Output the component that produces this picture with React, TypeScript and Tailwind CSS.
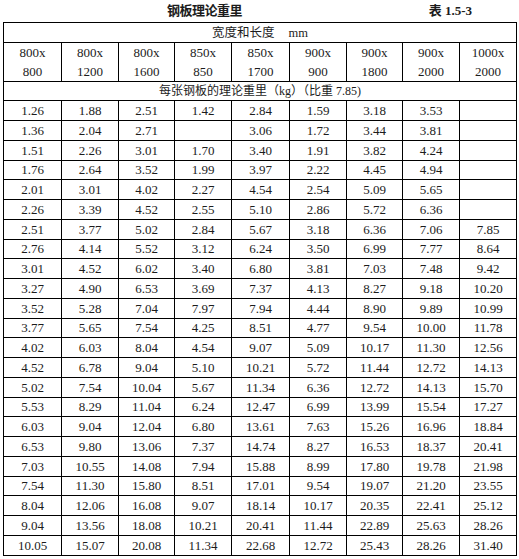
const sizes = [
  ["800x", "800"],
  ["800x", "1200"],
  ["800x", "1600"],
  ["850x", "850"],
  ["850x", "1700"],
  ["900x", "900"],
  ["900x", "1800"],
  ["900x", "2000"],
  ["1000x", "2000"],
];

const rows: string[][] = [
  ["1.26", "1.88", "2.51", "1.42", "2.84", "1.59", "3.18", "3.53", ""],
  ["1.36", "2.04", "2.71", "", "3.06", "1.72", "3.44", "3.81", ""],
  ["1.51", "2.26", "3.01", "1.70", "3.40", "1.91", "3.82", "4.24", ""],
  ["1.76", "2.64", "3.52", "1.99", "3.97", "2.22", "4.45", "4.94", ""],
  ["2.01", "3.01", "4.02", "2.27", "4.54", "2.54", "5.09", "5.65", ""],
  ["2.26", "3.39", "4.52", "2.55", "5.10", "2.86", "5.72", "6.36", ""],
  ["2.51", "3.77", "5.02", "2.84", "5.67", "3.18", "6.36", "7.06", "7.85"],
  ["2.76", "4.14", "5.52", "3.12", "6.24", "3.50", "6.99", "7.77", "8.64"],
  ["3.01", "4.52", "6.02", "3.40", "6.80", "3.81", "7.03", "7.48", "9.42"],
  ["3.27", "4.90", "6.53", "3.69", "7.37", "4.13", "8.27", "9.18", "10.20"],
  ["3.52", "5.28", "7.04", "7.97", "7.94", "4.44", "8.90", "9.89", "10.99"],
  ["3.77", "5.65", "7.54", "4.25", "8.51", "4.77", "9.54", "10.00", "11.78"],
  ["4.02", "6.03", "8.04", "4.54", "9.07", "5.09", "10.17", "11.30", "12.56"],
  ["4.52", "6.78", "9.04", "5.10", "10.21", "5.72", "11.44", "12.72", "14.13"],
  ["5.02", "7.54", "10.04", "5.67", "11.34", "6.36", "12.72", "14.13", "15.70"],
  ["5.53", "8.29", "11.04", "6.24", "12.47", "6.99", "13.99", "15.54", "17.27"],
  ["6.03", "9.04", "12.04", "6.80", "13.61", "7.63", "15.26", "16.96", "18.84"],
  ["6.53", "9.80", "13.06", "7.37", "14.74", "8.27", "16.53", "18.37", "20.41"],
  ["7.03", "10.55", "14.08", "7.94", "15.88", "8.99", "17.80", "19.78", "21.98"],
  ["7.54", "11.30", "15.80", "8.51", "17.01", "9.54", "19.07", "21.20", "23.55"],
  ["8.04", "12.06", "16.08", "9.07", "18.14", "10.17", "20.35", "22.41", "25.12"],
  ["9.04", "13.56", "18.08", "10.21", "20.41", "11.44", "22.89", "25.63", "28.26"],
  ["10.05", "15.07", "20.08", "11.34", "22.68", "12.72", "25.43", "28.26", "31.40"],
];

const colWidths = ["w-[58px]", "w-[57px]", "w-[56px]", "w-[57px]", "w-[58px]", "w-[57px]", "w-[56px]", "w-[57px]", "w-[57px]"];

export default function App() {
  return (
    <div className="h-[559px] w-[519px] bg-white text-[#1c1c1c] font-['Liberation_Serif','Noto_Sans_CJK_SC',serif]">
      <div className="flex h-[22px] items-center font-bold text-[13px]">
        <span className="ml-[167px] tracking-[-0.5px]">钢板理论重里</span>
        <span className="ml-auto mr-[47px]">表 1.5-3</span>
      </div>

      <table className="ml-[3px] w-[514px] table-fixed border-collapse text-center text-[13px] leading-[16px]">
        <colgroup>
          {colWidths.map((w, i) => (
            <col key={i} className={w} />
          ))}
        </colgroup>
        <tbody>
          <tr className="h-[20px]">
            <td colSpan={9} className="border border-black p-0 text-[12.5px]">
              宽度和长度<span className="ml-[14px]">mm</span>
            </td>
          </tr>
          <tr className="h-[38px]">
            {sizes.map(([a, b], i) => (
              <td key={i} className="border border-black p-0 leading-[19px]">
                <div>{a}</div>
                <div>{b}</div>
              </td>
            ))}
          </tr>
          <tr className="h-[19px]">
            <td colSpan={9} className="border border-black p-0 text-[12px]">
              每张钢板的理论重里（kg）（比重 7.85)
            </td>
          </tr>
          {rows.map((r, i) => (
            <tr key={i} className={i % 4 === 3 ? "h-[19px]" : "h-[20px]"}>
              {r.map((v, j) => (
                <td key={j} className="border border-black p-0">
                  {v}
                </td>
              ))}
            </tr>
          ))}
        </tbody>
      </table>
    </div>
  );
}
